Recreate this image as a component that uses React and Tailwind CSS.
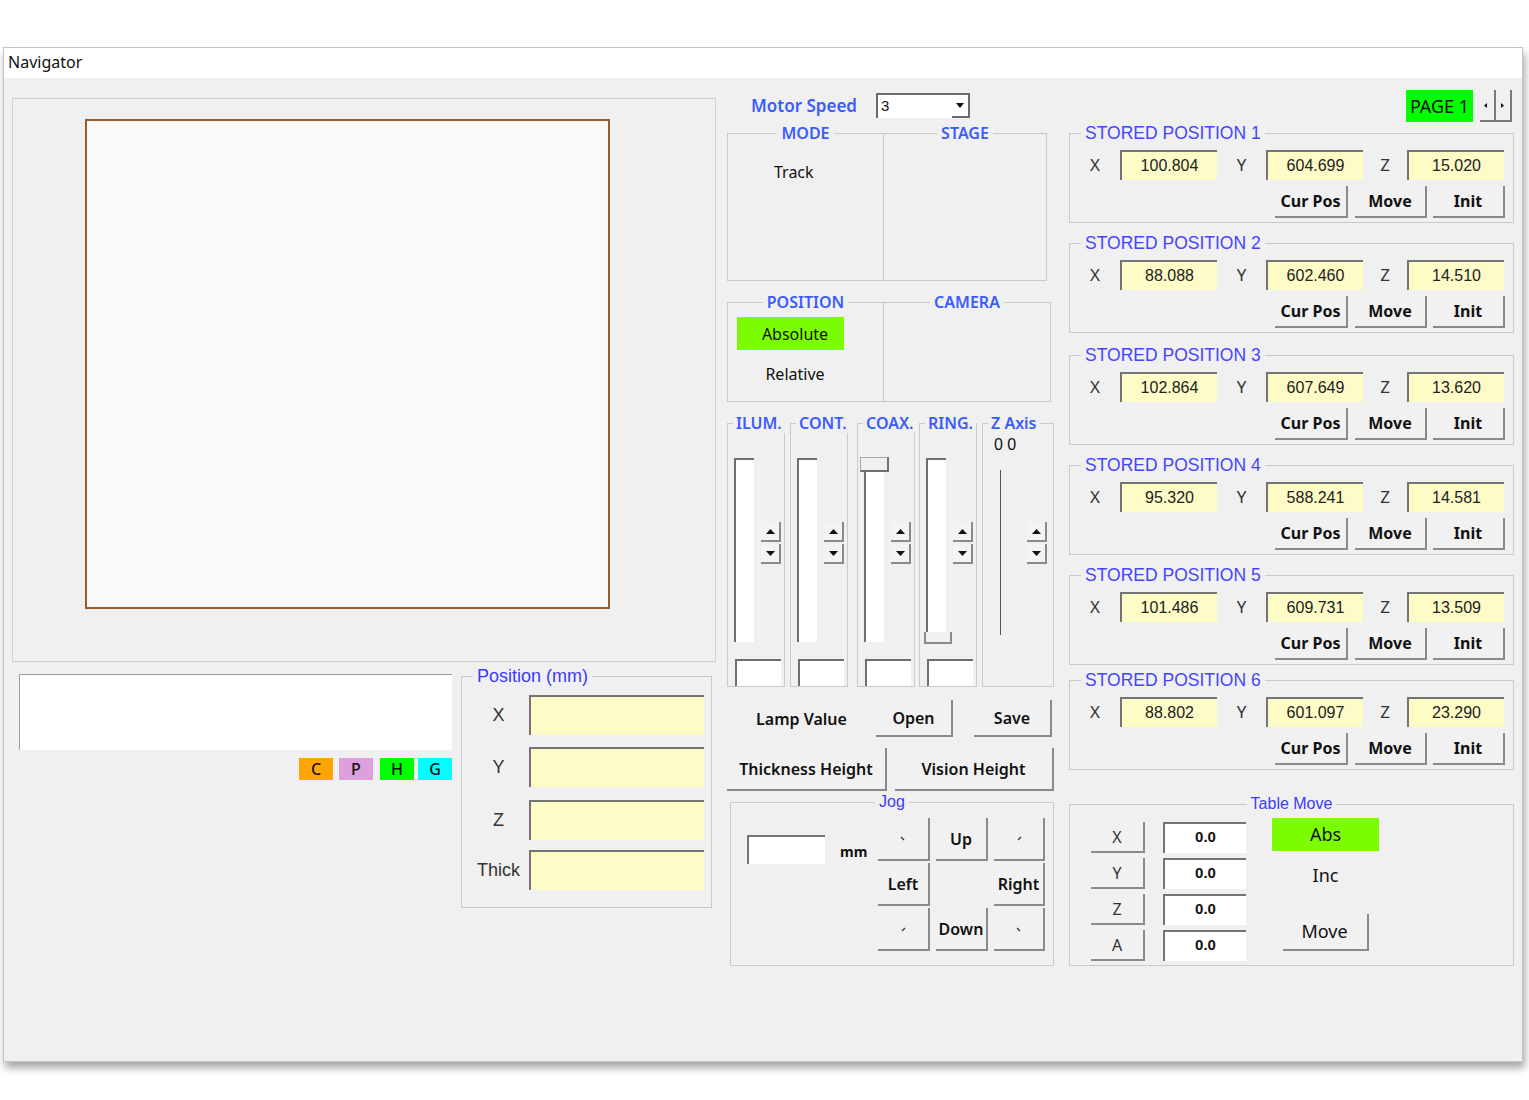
import React from "react";

const ARIAL = "font-['Liberation_Sans',Arial,sans-serif]";

const stored = [
  { x: "100.804", y: "604.699", z: "15.020", mt: "mt-[1px]" },
  { x: "88.088", y: "602.460", z: "14.510", mt: "mt-[10px]" },
  { x: "102.864", y: "607.649", z: "13.620", mt: "mt-[12px]" },
  { x: "95.320", y: "588.241", z: "14.581", mt: "mt-[10px]" },
  { x: "101.486", y: "609.731", z: "13.509", mt: "mt-[10px]" },
  { x: "88.802", y: "601.097", z: "23.290", mt: "mt-[5px]" },
];

// group box, legend sits on the top border like a win32 frame
const Group = ({ title, legend = "center", legendClass = "", className = "", children }) => {
  const pos =
    legend === "center"
      ? "mx-auto px-[4px]"
      : legend === "slider"
      ? "ml-[5px] px-[3px]"
      : "ml-[11px] px-[4px]";
  return (
    <fieldset className={`min-w-0 border border-[#cacaca] ${className}`}>
      <legend className={`${pos} leading-[20px] whitespace-nowrap ${legendClass}`}>{title}</legend>
      {children}
    </fieldset>
  );
};

const Btn = ({ className = "", children }) => (
  <button className={`flex items-center justify-center bg-[#f1f1f1] border-r-2 border-b-2 border-[#8a8a8a] ${className}`}>
    {children}
  </button>
);

const Field = ({ className = "", children }) => (
  <div className={`flex items-center justify-center border-t-2 border-l-2 border-[#747474] ${className}`}>
    {children}
  </div>
);

const Spin = ({ className = "" }) => (
  <div className={`flex flex-col gap-[2px] ${className}`}>
    <div className="w-[20px] h-[20px] flex items-center justify-center bg-[#f3f3f3] border-r-2 border-b-2 border-[#8a8a8a]">
      <svg width="9" height="5" viewBox="0 0 9 5">
        <path d="M0 5L4.5 0L9 5Z" fill="#111" />
      </svg>
    </div>
    <div className="w-[20px] h-[20px] flex items-center justify-center bg-[#f3f3f3] border-r-2 border-b-2 border-[#8a8a8a]">
      <svg width="9" height="5" viewBox="0 0 9 5">
        <path d="M0 0L9 0L4.5 5Z" fill="#111" />
      </svg>
    </div>
  </div>
);

const Slider = ({ title, className = "", thumb }) => (
  <Group
    title={title}
    legend="slider"
    legendClass="text-[16px] font-semibold text-[#3a5cff]"
    className={`w-[58px] h-[274px] shrink-0 ${className}`}
  >
    <div className="mt-[25px] h-[184px] flex items-start">
      <div className="relative ml-[6px] w-[20px] h-full bg-white border-l-2 border-t-2 border-[#6f6f6f]">
        {thumb === "top" && (
          <div className="absolute -top-[3px] -left-[6px] w-[29px] h-[15px] bg-[#f0f0f0] border-t border-l border-[#a8a8a8] border-r-2 border-b-2 border-r-[#6f6f6f] border-b-[#6f6f6f]" />
        )}
        {thumb === "bottom" && (
          <div className="absolute -bottom-[2px] -left-[4px] w-[28px] h-[12px] bg-[#f0f0f0] border-l-2 border-[#8a8a8a] border-r-2 border-b-2" />
        )}
      </div>
      <Spin className="ml-[7px] mt-[64px]" />
    </div>
    <div className="mt-[17px] ml-[7px] w-[46px] h-[27px] bg-white border-l-2 border-t-2 border-[#6f6f6f]" />
  </Group>
);

const Tick = ({ d }) => (
  <svg width="8" height="8" viewBox="0 0 8 8">
    <path d={d} stroke="#333" strokeWidth="1.2" fill="none" />
  </svg>
);

const LeftColumn = () => (
  <div className="mt-[20px] w-[704px] shrink-0">
    <div className="h-[564px] border border-[#d2d2d2] pl-[72px] pt-[20px]">
      <div className="w-[525px] h-[490px] border-2 border-[#9a5b2e] bg-[#f9f9f9]" />
    </div>
    <div className="mt-[4px] flex items-start">
      <div className="ml-[7px] mt-[8px] w-[433px]">
        <div className="h-[76px] bg-white border-t border-l border-[#9c9c9c]" />
        <div className="mt-[8px] flex justify-end text-[16px] font-medium">
          <div className="w-[34px] h-[22px] flex items-center justify-center bg-[#ffa500]">C</div>
          <div className="ml-[6px] w-[34px] h-[22px] flex items-center justify-center bg-[#dda0dd]">P</div>
          <div className="ml-[7px] w-[34px] h-[22px] flex items-center justify-center bg-[#00ff00]">H</div>
          <div className="ml-[4px] w-[34px] h-[22px] flex items-center justify-center bg-[#00ffff]">G</div>
        </div>
      </div>
      <Group
        title="Position (mm)"
        legend="left"
        legendClass={`${ARIAL} text-[18px] text-[#3b3bff]`}
        className="ml-[9px] w-[251px] h-[242px]"
      >
        {[
          ["X", "mt-[9px]"],
          ["Y", "mt-[12px]"],
          ["Z", "mt-[13px]"],
          ["Thick", "mt-[10px]"],
        ].map(([label, mt]) => (
          <div key={label} className={`flex items-center ${mt}`}>
            <span className={`ml-[6px] w-[61px] text-center text-[18px] text-[#333] ${ARIAL}`}>{label}</span>
            <Field className="w-[175px] h-[40px] bg-[#fdfbc6]" />
          </div>
        ))}
      </Group>
    </div>
  </div>
);

const MiddleColumn = () => (
  <div className="ml-[11px] mt-[15px] w-[327px] shrink-0">
    <div className="h-[25px] flex items-center">
      <span className="ml-[24px] w-[125px] text-[17px] font-semibold text-[#3a5cff]">Motor Speed</span>
      <div className="w-[94px] h-[25px] bg-white border-t-2 border-l-2 border-[#6a6a6a] flex items-center">
        <span className={`ml-[3px] text-[15px] ${ARIAL}`}>3</span>
        <div className="ml-auto h-full w-[18px] flex items-center justify-center border-r-2 border-b-2 border-[#6a6a6a]">
          <svg width="8" height="5" viewBox="0 0 8 5">
            <path d="M0 0L8 0L4 5Z" fill="#111" />
          </svg>
        </div>
      </div>
    </div>

    <div className="mt-[5px] flex">
      <Group title="MODE" legendClass="text-[16px] font-semibold text-[#3a5cff]" className="w-[157px] h-[158px]">
        <div className="pt-[18px] pl-[46px] text-[16px] leading-[22px]">Track</div>
      </Group>
      <Group title="STAGE" legendClass="text-[16px] font-semibold text-[#3a5cff]" className="w-[163px] h-[158px] border-l-0" />
    </div>

    <div className="mt-[11px] flex">
      <Group title="POSITION" legendClass="text-[16px] font-semibold text-[#3a5cff]" className="w-[157px] h-[110px]">
        <div className="mt-[5px] ml-[9px] w-[107px] h-[33px] pl-[9px] bg-[#7cfc00] flex items-center justify-center text-[16px]">
          Absolute
        </div>
        <div className="mt-[7px] ml-[9px] w-[107px] h-[33px] pl-[9px] flex items-center justify-center text-[16px]">
          Relative
        </div>
      </Group>
      <Group title="CAMERA" legendClass="text-[16px] font-semibold text-[#3a5cff]" className="w-[167px] h-[110px] border-l-0" />
    </div>

    <div className="mt-[11px] flex items-start">
      <Slider title="ILUM." />
      <Slider title="CONT." className="ml-[5px]" />
      <Slider title="COAX." className="ml-[9px]" thumb="top" />
      <Slider title="RING." className="ml-[4px]" thumb="bottom" />
      <Group
        title="Z Axis"
        legend="slider"
        legendClass="text-[16px] font-semibold text-[#3a5cff]"
        className="ml-[5px] w-[72px] h-[274px] shrink-0"
      >
        <div className={`mt-[3px] pl-[11px] h-[18px] leading-[18px] text-[16px] ${ARIAL}`}>0 0</div>
        <div className="mt-[16px] h-[165px] flex items-start">
          <div className="ml-[17px] w-px h-full bg-[#555]" />
          <Spin className="ml-[26px] mt-[52px]" />
        </div>
      </Group>
    </div>

    <div className="mt-[13px] flex items-center h-[37px] text-[16px] font-semibold">
      <span className="w-[149px] text-center">Lamp Value</span>
      <Btn className="w-[77px] h-[37px]">Open</Btn>
      <Btn className="ml-[21px] w-[78px] h-[37px]">Save</Btn>
    </div>

    <div className="mt-[11px] flex text-[16px] font-semibold">
      <Btn className="w-[160px] h-[43px]">Thickness Height</Btn>
      <Btn className="ml-[8px] w-[159px] h-[43px]">Vision Height</Btn>
    </div>

    <Group
      title="Jog"
      legendClass={`${ARIAL} text-[16px] text-[#3b3bff]`}
      className="mt-[1px] ml-[3px] w-[324px] h-[174px]"
    >
      <div className="flex items-start">
        <div className="ml-[16px] mt-[23px] w-[131px] flex items-center">
          <Field className="w-[78px] h-[29px] bg-white" />
          <span className="ml-[15px] mt-[4px] text-[14px] font-bold">mm</span>
        </div>
        <div className="mt-[6px] grid grid-cols-[52px_52px_51px] auto-rows-[43px] gap-x-[6px] gap-y-[2px] text-[16px] font-semibold">
          <Btn><Tick d="M2 2L5 5" /></Btn>
          <Btn>Up</Btn>
          <Btn><Tick d="M3 5L6 2" /></Btn>
          <Btn>Left</Btn>
          <div />
          <Btn>Right</Btn>
          <Btn><Tick d="M3 6L6 3" /></Btn>
          <Btn>Down</Btn>
          <Btn><Tick d="M2 3L5 6" /></Btn>
        </div>
      </div>
    </Group>
  </div>
);

const StoredPosition = ({ index, p }) => (
  <Group
    title={`STORED POSITION ${index}`}
    legend="left"
    legendClass={`${ARIAL} text-[17.5px] text-[#4545ff]`}
    className={`w-[445px] h-[100px] ${p.mt}`}
  >
    <div className="mt-[7px] flex items-center text-[17px] text-[#333]">
      <span className="w-[50px] text-center">X</span>
      <Field className={`w-[97px] h-[30px] bg-[#fdfbc6] text-[16px] text-[#222] ${ARIAL}`}>{p.x}</Field>
      <span className="w-[49px] text-center">Y</span>
      <Field className={`w-[97px] h-[30px] bg-[#fdfbc6] text-[16px] text-[#222] ${ARIAL}`}>{p.y}</Field>
      <span className="w-[44px] text-center">Z</span>
      <Field className={`w-[97px] h-[30px] bg-[#fdfbc6] text-[16px] text-[#222] ${ARIAL}`}>{p.z}</Field>
    </div>
    <div className="mt-[6px] pr-[8px] flex justify-end text-[16px] font-bold">
      <Btn className="w-[73px] h-[32px]">Cur Pos</Btn>
      <Btn className="ml-[7px] w-[72px] h-[32px]">Move</Btn>
      <Btn className="ml-[6px] w-[72px] h-[32px]">Init</Btn>
    </div>
  </Group>
);

const RightColumn = () => (
  <div className="ml-[15px] mt-[12px] w-[445px] shrink-0">
    <div className="h-[32px] flex justify-end pr-[2px]">
      <div className="w-[67px] h-[32px] bg-[#00ff00] flex items-center justify-center text-[18px]">PAGE 1</div>
      <div className="ml-[7px] flex">
        <div className="w-[16px] h-[32px] flex items-center pl-[4px] border-r-2 border-b-2 border-[#7a7a7a]">
          <svg width="3" height="5" viewBox="0 0 3 5">
            <path d="M3 0L0 2.5L3 5Z" fill="#111" />
          </svg>
        </div>
        <div className="w-[16px] h-[32px] flex items-center pl-[5px] border-r-2 border-b-2 border-[#7a7a7a]">
          <svg width="3" height="5" viewBox="0 0 3 5">
            <path d="M0 0L3 2.5L0 5Z" fill="#111" />
          </svg>
        </div>
      </div>
    </div>

    {stored.map((p, i) => (
      <StoredPosition key={i} index={i + 1} p={p} />
    ))}

    <Group
      title="Table Move"
      legendClass={`${ARIAL} text-[16px] text-[#3b3bff]`}
      className="mt-[24px] w-[445px] h-[172px]"
    >
      <div className="flex items-start">
        <div className="ml-[21px] mt-[8px] flex flex-col gap-[5px] text-[16px] text-[#333]">
          {["X", "Y", "Z", "A"].map((a) => (
            <Btn key={a} className="w-[54px] h-[31px]">{a}</Btn>
          ))}
        </div>
        <div className="ml-[18px] mt-[8px] flex flex-col gap-[5px]">
          {["X", "Y", "Z", "A"].map((a) => (
            <Field key={a} className={`w-[83px] h-[31px] bg-white items-start pt-[2px] text-[15px] font-bold ${ARIAL}`}>
              0.0
            </Field>
          ))}
        </div>
        <div className="ml-[26px] mt-[4px] w-[107px] flex flex-col items-center text-[18px]">
          <div className="w-[107px] h-[33px] bg-[#7cfc00] flex items-center justify-center">Abs</div>
          <div className="mt-[12px] h-[24px] leading-[24px]">Inc</div>
          <Btn className="mt-[27px] w-[86px] h-[37px]">Move</Btn>
        </div>
      </div>
    </Group>
  </div>
);

export default function App() {
  return (
    <div className="w-[1529px] h-[1100px] bg-white pt-[47px] pl-[3px] font-['Noto_Sans',sans-serif] text-[#111]">
      <div className="w-[1520px] h-[1015px] flex flex-col bg-[#f0f0f0] border border-[#c4c4c4] shadow-[2px_6px_8px_rgba(0,0,0,0.35)]">
        <div className="h-[30px] shrink-0 bg-white flex items-center pl-[4px] pb-[3px] text-[16px]">Navigator</div>
        <div className="flex items-start pl-[8px]">
          <LeftColumn />
          <MiddleColumn />
          <RightColumn />
        </div>
      </div>
    </div>
  );
}
